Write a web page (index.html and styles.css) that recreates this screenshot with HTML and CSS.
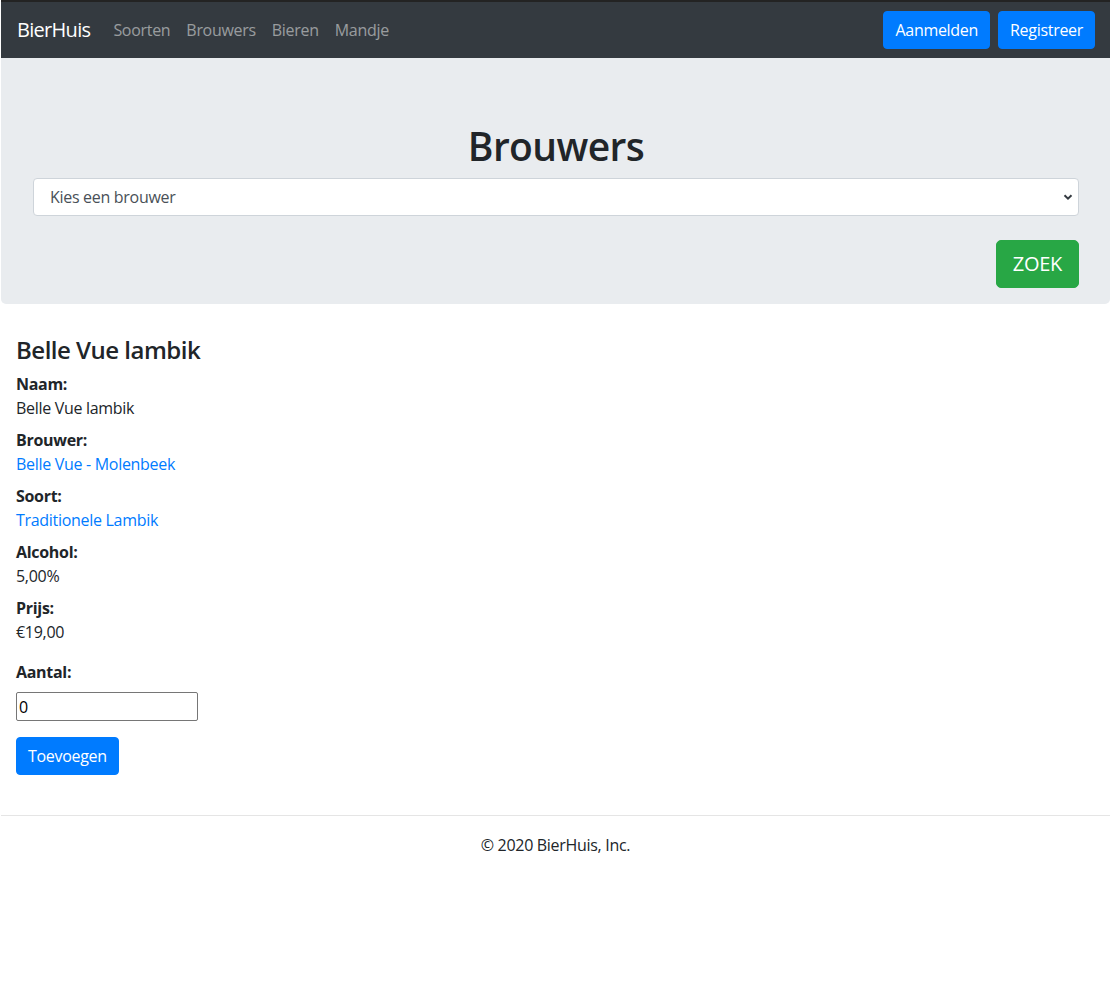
FILE: index.html
```html
<!DOCTYPE html>
<html lang="nl">
<head>
<meta charset="utf-8">
<title>BierHuis</title>
<link rel="stylesheet" href="styles.css">
</head>
<body>
<nav class="navbar">
  <a class="brand" href="#">BierHuis</a>
  <ul class="nav-links">
    <li><a href="#">Soorten</a></li>
    <li><a href="#">Brouwers</a></li>
    <li><a href="#">Bieren</a></li>
    <li><a href="#">Mandje</a></li>
  </ul>
  <div class="nav-actions">
    <a class="btn btn-primary" href="#">Aanmelden</a>
    <a class="btn btn-primary" href="#">Registreer</a>
  </div>
</nav>
<section class="jumbotron">
  <h1 class="jumbo-title">Brouwers</h1>
  <form class="search-form">
    <div class="select-wrap">
      <select class="form-select">
        <option>Kies een brouwer</option>
      </select>
      <svg class="chevron" width="10" height="8" viewBox="0 0 10 8"><path d="M1.5 2.2 L5 5.6 L8.5 2.2" fill="none" stroke="#343a40" stroke-width="2"/></svg>
    </div>
    <div class="search-actions">
      <button type="button" class="btn btn-success btn-lg">ZOEK</button>
    </div>
  </form>
</section>
<main class="content">
  <h2 class="beer-title">Belle Vue lambik</h2>
  <dl class="details">
    <dt>Naam:</dt>
    <dd>Belle Vue lambik</dd>
    <dt>Brouwer:</dt>
    <dd><a href="#">Belle Vue - Molenbeek</a></dd>
    <dt>Soort:</dt>
    <dd><a href="#">Traditionele Lambik</a></dd>
    <dt>Alcohol:</dt>
    <dd>5,00%</dd>
    <dt>Prijs:</dt>
    <dd>€19,00</dd>
  </dl>
  <form class="order-form">
    <label class="order-label" for="aantal">Aantal:</label>
    <div class="order-field"><input id="aantal" class="order-input" type="number" value="0"></div>
    <button type="button" class="btn btn-primary">Toevoegen</button>
  </form>
</main>
<footer class="footer">
  <p class="footer-text">© 2020 BierHuis, Inc.</p>
</footer>
</body>
</html>
```

FILE: styles.css
```css
* { box-sizing: border-box; }
html, body { margin: 0; }
body {
  padding-left: 1px;
  font-family: "Open Sans", "Noto Sans", sans-serif;
  font-size: 16px;
  line-height: 1.5;
  color: #212529;
  background: #fff;
  letter-spacing: -0.3px;
}
a { color: #007bff; text-decoration: none; }

.navbar {
  display: flex;
  align-items: center;
  height: 58px;
  padding: 0 15px 0 16px;
  background: #343a40;
  border-top: 2px solid #232323;
}
.brand {
  color: #fff;
  font-size: 20px;
  letter-spacing: -0.7px;
  margin-right: 15px;
}
.nav-links {
  display: flex;
  list-style: none;
  margin: 0;
  padding: 0;
  flex: 1;
}
.nav-links a {
  display: block;
  padding: 8px;
  color: rgba(255,255,255,.5);
}
.nav-actions { display: flex; gap: 8px; }

.btn {
  display: inline-block;
  border: 1px solid transparent;
  border-radius: 4px;
  padding: 6px 11px;
  font-family: inherit;
  font-size: 16px;
  line-height: 24px;
  letter-spacing: inherit;
  color: #fff;
  cursor: pointer;
}
.btn-primary { background: #007bff; border-color: #007bff; }
.btn-success { background: #28a745; border-color: #28a745; }
.btn-lg { font-size: 20px; line-height: 30px; padding: 8px 16px; border-radius: 5px; }

.jumbotron {
  background: #e9ecef;
  border-radius: 0 0 5px 5px;
  padding: 64px 31px 16px 32px;
}
.jumbo-title {
  margin: 0 0 8px;
  text-align: center;
  font-size: 39px;
  font-weight: 600;
  letter-spacing: -0.6px;
  line-height: 48px;
}
.select-wrap { position: relative; margin-bottom: 24px; }
.form-select {
  width: 100%;
  height: 38px;
  appearance: none;
  -webkit-appearance: none;
  background: #fff;
  border: 1px solid #ced4da;
  border-radius: 4px;
  padding: 0 16px;
  font-family: inherit;
  font-size: 16px;
  letter-spacing: inherit;
  color: #495057;
}
.chevron { position: absolute; right: 6px; top: 15px; pointer-events: none; }
.search-actions { display: flex; justify-content: flex-end; }

.content { padding: 32px 15px 0; }
.beer-title {
  margin: 0 0 8px;
  font-size: 24px;
  font-weight: 600;
  letter-spacing: -0.5px;
  line-height: 28px;
}
.details { margin: 0 0 16px; }
.details dt { font-weight: 700; }
.details dd { margin: 0 0 8px; }
.order-label { display: block; font-weight: 700; margin-bottom: 8px; }
.order-field { margin-bottom: 16px; }
.order-input {
  width: 182px;
  height: 29px;
  border: 1px solid #767676;
  border-radius: 2px;
  padding: 1px 2px;
  font-family: inherit;
  font-size: 16px;
  color: #000;
}

.footer {
  margin-top: 40px;
  border-top: 1px solid rgba(0,0,0,.1);
  padding-top: 17px;
  text-align: center;
}
.footer-text { margin: 0 0 16px; }
```
